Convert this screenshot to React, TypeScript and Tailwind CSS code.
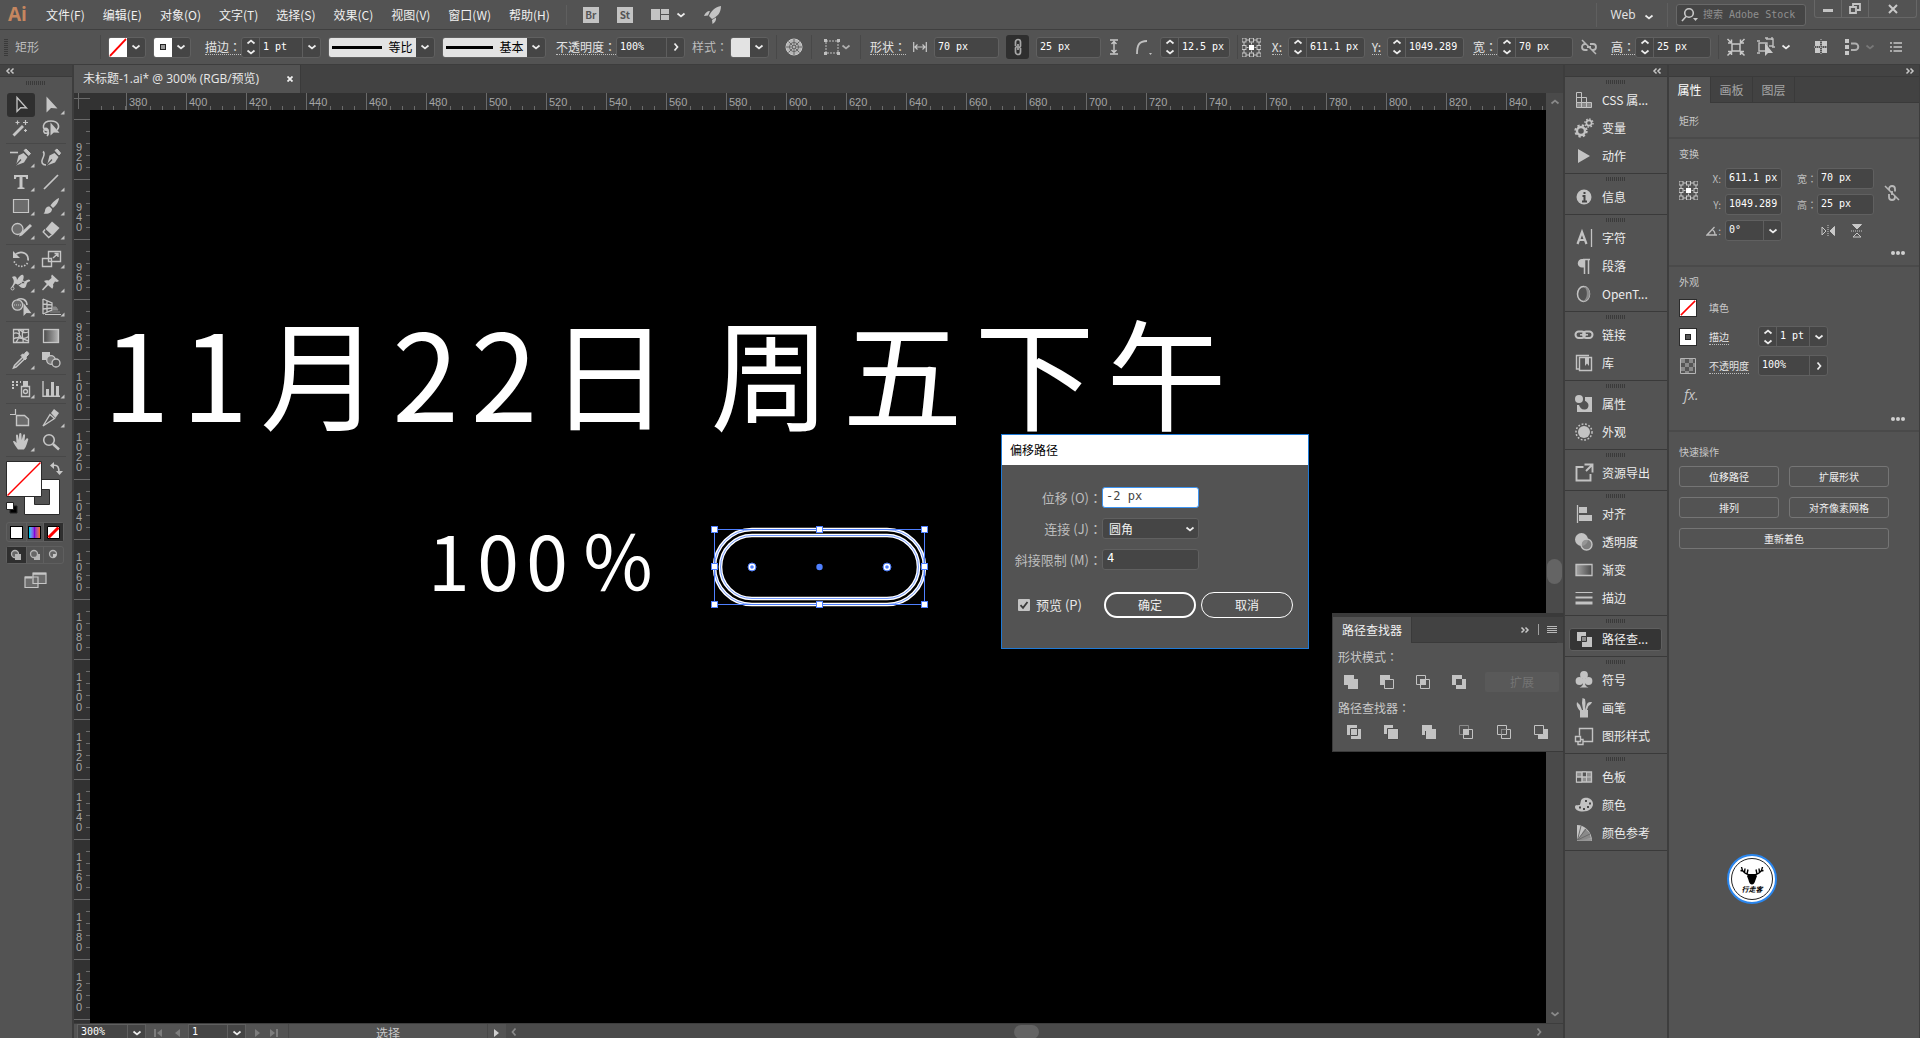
import { useState } from 'react';
import type { ReactNode } from 'react';
import clsx from 'clsx';

const MONO = "font-[family-name:'DejaVu_Sans_Mono','Noto_Sans_CJK_SC',monospace]";

const menus = ['文件(F)', '编辑(E)', '对象(O)', '文字(T)', '选择(S)', '效果(C)', '视图(V)', '窗口(W)', '帮助(H)'];

/* ---------- small shared pieces ---------- */

function Chevron({ dir = 'down', className }: { dir?: 'down' | 'up' | 'right' | 'left'; className?: string }) {
  const d = {
    down: 'M1.5 3.5 5 6.5 8.5 3.5',
    up: 'M1.5 6.5 5 3.5 8.5 6.5',
    right: 'M3.5 1.5 6.5 5 3.5 8.5',
    left: 'M6.5 1.5 3.5 5 6.5 8.5',
  }[dir];
  return (
    <svg viewBox="0 0 10 10" className={clsx('h-[10px] w-[10px] shrink-0', className ?? 'text-[#ececec]')} fill="none" stroke="currentColor" strokeWidth="1.7">
      <path d={d} />
    </svg>
  );
}

function DoubleChevron({ dir, className }: { dir: 'left' | 'right'; className?: string }) {
  return (
    <svg viewBox="0 0 10 8" className={clsx('h-2 w-[10px] shrink-0', className ?? 'text-[#c8c8c8]')} fill="none" stroke="currentColor" strokeWidth="1.5">
      {dir === 'left' ? <path d="M4.5 1.5 2 4l2.5 2.5M8.5 1.5 6 4l2.5 2.5" /> : <path d="M1.5 1.5 4 4 1.5 6.5M5.5 1.5 8 4 5.5 6.5" />}
    </svg>
  );
}

// the Traditional Chinese face centres the colon in its box
function Colon() {
  return <span lang="zh-TW" className="font-[family-name:'Noto_Sans_CJK_TC',sans-serif]">：</span>;
}

function Grip() {
  return <div className="h-1 w-5 bg-[repeating-linear-gradient(90deg,#3a3a3a_0_1px,transparent_1px_2px)]" />;
}

function Separator() {
  return <div className="h-6 w-px shrink-0 bg-[#484848]" />;
}

function Stepper({ name }: { name: string }) {
  return (
    <div className="flex w-[18px] shrink-0 flex-col items-center justify-center border-r border-[#5e5e5e]">
      <button aria-label={`${name} +`}><Chevron dir="up" /></button>
      <button aria-label={`${name} -`}><Chevron /></button>
    </div>
  );
}

type FieldProps = {
  id: string;
  label: string;
  value: string;
  className: string;
  stepper?: boolean;
  arrow?: 'down' | 'right';
};

function Field({ id, label, value, className, stepper, arrow }: FieldProps) {
  return (
    <div className={clsx('flex h-[21px] shrink-0 overflow-hidden rounded-[3px] border border-[#606060] bg-[#454545]', className)}>
      {stepper && <Stepper name={label} />}
      <input
        id={id}
        aria-label={label}
        defaultValue={value}
        className={clsx('w-0 min-w-0 grow bg-transparent px-[3px] pb-[2px] text-[10px] text-white outline-none', MONO)}
      />
      {arrow && (
        <button aria-label={`${label} ▾`} className="flex w-[18px] shrink-0 items-center justify-center border-l border-[#5e5e5e]">
          <Chevron dir={arrow} />
        </button>
      )}
    </div>
  );
}

function BarLabel({ htmlFor, children, className }: { htmlFor: string; children: ReactNode; className: string }) {
  return (
    <label htmlFor={htmlFor} className={clsx('flex shrink-0 justify-end whitespace-nowrap text-[12px] text-[#e4e4e4]', className)}>
      <span className="border-b border-dotted border-[#bdbdbd] leading-[15px]">{children}</span>
    </label>
  );
}

function NoneSwatch({ className }: { className?: string }) {
  return (
    <svg viewBox="0 0 19 19" className={className} preserveAspectRatio="none">
      <rect width="19" height="19" fill="#fff" />
      <path d="M1 18 18 1" stroke="#f00" strokeWidth="1.8" />
    </svg>
  );
}

function Swatch({ label, className, children }: { label: string; className: string; children: ReactNode }) {
  return (
    <button aria-label={label} className={clsx('flex h-[21px] shrink-0 overflow-hidden rounded-[3px] border border-[#606060] bg-[#454545]', className)}>
      <span className="flex h-full grow items-center justify-center bg-[#e3e3e3] text-[12px] text-black">{children}</span>
      <span className="flex h-full w-[18px] shrink-0 items-center justify-center"><Chevron /></span>
    </button>
  );
}

function RefPoint({ className }: { className: string }) {
  const pts = [2, 9.5, 17];
  return (
    <svg viewBox="0 0 19 19" className={className} fill="none" stroke="#c8c8c8">
      <path d="M2 2h15v15H2z" />
      {pts.map((y) =>
        pts.map((x) => (
          <rect
            key={`${x}-${y}`}
            x={x - 2}
            y={y - 2}
            width="4"
            height="4"
            fill={x === 9.5 && y === 9.5 ? '#fff' : '#535353'}
            stroke={x === 9.5 && y === 9.5 ? '#fff' : '#c8c8c8'}
          />
        )),
      )}
      <path d="M4.500 9.500h2M12.500 9.500h2M9.500 4.500v2M9.500 12.500v2" />
    </svg>
  );
}

function Unlink({ className }: { className?: string }) {
  return (
    <svg viewBox="0 0 18 18" className={className} fill="none" stroke="#b8b8b8" strokeWidth="1.8">
      <path d="M6 6V5a3 3 0 0 1 6 0v2.500M6 10v3a3 3 0 0 0 6 0v-1M9 7v4" />
      <path d="M2 2l14 14" strokeWidth="1.5" />
    </svg>
  );
}

/* ---------- top bars ---------- */

function MenuBar() {
  return (
    <header className="flex h-[30px] shrink-0 items-center border-b border-[#3f3f3f] pl-2">
      <span className="w-[22px] text-[19px] font-bold leading-none text-[#c6865f] font-[family-name:'Open_Sans',sans-serif]">Ai</span>
      <nav className="flex gap-[18px] pl-4">
        {menus.map((m) => (
          <button key={m} className="whitespace-nowrap text-[12px] text-[#f0f0f0]">{m}</button>
        ))}
      </nav>
      <div className="ml-4 h-5 w-px bg-[#5f5f5f]" />
      <div className="flex items-center gap-[18px] pl-4">
        <button className="h-4 w-4 bg-[#c3c3c3] text-center text-[10px] font-bold leading-4 text-[#555]">Br</button>
        <button className="h-4 w-4 bg-[#c3c3c3] text-center text-[10px] font-bold leading-4 text-[#555]">St</button>
        <button aria-label="排列文档" className="flex items-center gap-[7px]">
          <svg viewBox="0 0 18 11" className="h-[11px] w-[18px]" fill="#c3c3c3">
            <path d="M0 0h9v11H0zM10 0h8v5h-8zM10 6h8v5h-8z" />
          </svg>
          <Chevron />
        </button>
        <button aria-label="GPU">
          <svg viewBox="0 0 18 18" className="h-[18px] w-[18px]" fill="#c3c3c3">
            <path d="M17 0C11 1 7 5 5 10l3 3c5-2 9-6 9-13zM6 5C3 5 1 7 0 10l4-.5zM8 14l4-2.500c.5 3-1 5-3.500 6.500z" />
          </svg>
        </button>
      </div>
      <div className="ml-auto flex h-full items-center">
        <div className="h-6 w-px bg-[#5f5f5f]" />
        <button className="flex h-6 w-[70px] items-center justify-center gap-2 text-[12px] text-[#e6e6e6] font-[family-name:'Open_Sans',sans-serif]">
          Web <Chevron className="mt-1 text-[#ececec]" />
        </button>
        <div className="h-6 w-px bg-[#5f5f5f]" />
        <div className="ml-2 flex h-[22px] w-[130px] items-center rounded-[3px] border border-[#686868] bg-[#454545] pl-1">
          <svg viewBox="0 0 18 16" className="h-4 w-[18px] shrink-0" fill="none" stroke="#c8c8c8" strokeWidth="1.6">
            <circle cx="8" cy="6" r="4.300" />
            <path d="M5 9.500 1 14" />
            <path d="M12 11h5l-2.500 3z" fill="#c8c8c8" stroke="none" />
          </svg>
          <input
            aria-label="搜索 Adobe Stock"
            placeholder="搜索 Adobe Stock"
            className={clsx('ml-1 w-0 grow bg-transparent text-[10px] text-white outline-none placeholder:text-[#8f8f8f]', MONO)}
          />
        </div>
        <div className="ml-2 mr-[3px] flex h-[18px] self-start rounded-b-[3px] border border-t-0 border-[#676767]">
          <button aria-label="最小化" className="flex w-[27px] items-center justify-center border-r border-[#676767]">
            <span className="mt-1 h-[3px] w-[10px] bg-[#c3c3c3]" />
          </button>
          <button aria-label="还原" className="flex w-[27px] items-center justify-center border-r border-[#676767]">
            <svg viewBox="0 0 12 11" className="h-[11px] w-3" fill="none" stroke="#c3c3c3" strokeWidth="1.8">
              <path d="M1 4h6v6H1zM4 3V1h7v6H8" />
            </svg>
          </button>
          <button aria-label="关闭" className="flex w-[47px] items-center justify-center">
            <svg viewBox="0 0 10 10" className="h-[10px] w-[10px]" stroke="#c8c8c8" strokeWidth="2">
              <path d="M1 1l8 8M9 1 1 9" />
            </svg>
          </button>
        </div>
      </div>
    </header>
  );
}

function ControlBar() {
  return (
    <section className="flex h-[35px] shrink-0 items-center gap-[7px] border-b border-[#3d3d3d] pl-1">
      <div className="h-[18px] w-1 shrink-0 bg-[repeating-linear-gradient(0deg,#3a3a3a_0_1px,transparent_1px_2px)]" />
      <span className="w-[78px] shrink-0 text-[12px] text-[#bdbdbd]">矩形</span>
      <Separator />
      <Swatch label="填色" className="w-[38px]"><NoneSwatch className="h-full w-full" /></Swatch>
      <Swatch label="描边颜色" className="w-[38px]">
        <span className="flex h-full w-full items-center justify-center bg-white"><span className="h-[6px] w-[6px] border border-[#222] bg-[#999]" /></span>
      </Swatch>
      <div className="flex shrink-0 items-center">
        <BarLabel htmlFor="bar-stroke" className="w-[43px]">描边<Colon /></BarLabel>
        <Field id="bar-stroke" label="描边" value="1 pt" className="w-[80px]" stepper arrow="down" />
      </div>
      <Swatch label="变量宽度配置文件" className="w-[107px]">
        <span className="flex items-center gap-[6px]"><span className="h-[3px] w-[50px] bg-black" />等比</span>
      </Swatch>
      <Swatch label="画笔定义" className="w-[104px]">
        <span className="flex items-center gap-[6px]"><span className="h-[3px] w-[47px] bg-black" />基本</span>
      </Swatch>
      <div className="flex shrink-0 items-center">
        <BarLabel htmlFor="bar-opacity" className="w-[63px]">不透明度<Colon /></BarLabel>
        <Field id="bar-opacity" label="不透明度" value="100%" className="w-[69px]" arrow="right" />
      </div>
      <div className="flex shrink-0 items-center">
        <span className="w-[38px] text-[12px] text-[#bdbdbd]">样式<Colon /></span>
        <Swatch label="样式" className="w-[39px]">{null}</Swatch>
      </div>
      <Separator />
      <button aria-label="重新着色图稿" className="shrink-0">
        <svg viewBox="0 0 20 20" className="h-5 w-5" stroke="#666" strokeWidth="1">
          <circle cx="10" cy="10" r="8" fill="#b5b5b5" stroke="#c8c8c8" />
          <path d="M10 2v16M2 10h16M4.500 4.500l11 11M15.500 4.500l-11 11" />
          <circle cx="10" cy="10" r="4.500" fill="none" />
          <circle cx="10" cy="10" r="1.500" fill="#d5d5d5" />
        </svg>
      </button>
      <Separator />
      <button aria-label="对齐所选对象" className="flex w-[34px] shrink-0 items-center">
        <svg viewBox="0 0 18 18" className="ml-1 h-[18px] w-[18px]" fill="none" stroke="#c0c0c0">
          <path d="M3 3h12v12H3z" strokeDasharray="2 1" />
          <path d="M1 1h3v3H1zM14 1h3v3h-3zM1 14h3v3H1zM14 14h3v3h-3z" fill="#c0c0c0" stroke="none" />
        </svg>
        <Chevron className="text-[#b0b0b0]" />
      </button>
      <Separator />
      <BarLabel htmlFor="bar-shape-w" className="w-[38px]">形状<Colon /></BarLabel>
      <svg viewBox="0 0 14 10" className="h-[10px] w-[14px] shrink-0" fill="none" stroke="#c8c8c8" strokeWidth="1.2">
        <path d="M.7 0v10M13.300 0v10M2 5h10M4.500 2.500 2 5l2.500 2.500M9.500 2.500 12 5 9.500 7.500" />
      </svg>
      <Field id="bar-shape-w" label="形状宽度" value="70 px" className="w-[65px]" />
      <button aria-label="约束宽度和高度比例" className="flex h-6 w-[23px] shrink-0 items-center justify-center rounded-[3px] bg-[#2f2f2f]">
        <svg viewBox="0 0 10 18" className="h-[18px] w-[10px]" fill="none" stroke="#a8a8a8" strokeWidth="1.7">
          <path d="M2.500 8V4a2.500 2.500 0 0 1 5 0v4a2 2 0 0 1-1.500 1.500M7.500 10v4a2.500 2.500 0 0 1-5 0v-4A2 2 0 0 1 4 8.500M5 6v6" />
        </svg>
      </button>
      <Field id="bar-shape-h" label="形状高度" value="25 px" className="w-[65px]" />
      <svg viewBox="0 0 12 16" className="h-4 w-3 shrink-0" fill="none" stroke="#c8c8c8" strokeWidth="1.4">
        <path d="M2 1h8M2 15h8M6 2v12M3.500 5 6 2.500 8.500 5M3.500 11 6 13.500 8.500 11" />
      </svg>
      <button aria-label="圆角类型" className="flex w-[26px] shrink-0 justify-end">
        <svg viewBox="0 0 18 18" className="h-[18px] w-[18px]" fill="none" stroke="#c0c0c0" strokeWidth="1.8">
          <path d="M2 16C2 7 4 3 12 3" />
          <path d="M14 15h3l-1.500 2z" fill="#c0c0c0" stroke="none" />
        </svg>
      </button>
      <Field id="bar-radius" label="圆角半径" value="12.5 px" className="w-[70px]" stepper />
      <div className="flex shrink-0 items-center gap-1">
        <Separator />
        <RefPoint className="h-[19px] w-[19px] shrink-0" />
        <div className="flex items-center">
          <BarLabel htmlFor="bar-x" className="w-[23px] pr-[6px]">X:</BarLabel>
          <Field id="bar-x" label="X" value="611.1 px" className="w-[77px]" stepper />
        </div>
      </div>
      <div className="flex shrink-0 items-center">
        <BarLabel htmlFor="bar-y" className="w-[15px] pr-[6px]">Y:</BarLabel>
        <Field id="bar-y" label="Y" value="1049.289" className="w-[77px]" stepper />
      </div>
      <div className="flex shrink-0 items-center">
        <BarLabel htmlFor="bar-w" className="w-[26px]">宽<Colon /></BarLabel>
        <Field id="bar-w" label="宽" value="70 px" className="w-[76px]" stepper />
      </div>
      <Unlink className="h-[18px] w-[18px] shrink-0 rotate-90 -scale-y-100" />
      <div className="flex shrink-0 items-center">
        <BarLabel htmlFor="bar-h" className="w-[30px]">高<Colon /></BarLabel>
        <Field id="bar-h" label="高" value="25 px" className="w-[76px]" stepper />
      </div>
      <Separator />
      <button aria-label="隔离选中的对象" className="shrink-0">
        <svg viewBox="0 0 20 20" className="h-5 w-5" fill="none" stroke="#c8c8c8" strokeWidth="1.5">
          <path d="M6 7h8v7H6z" />
          <path d="M1.500 2 5 5.500M18.500 2 15 5.500M1.500 18.500 5 15M18.500 18.500 15 15M5.500 2.500v3.500H2M14.500 2.500v3.500H18M5.500 18v-3.500H2M14.500 18v-3.500H18" />
        </svg>
      </button>
      <button aria-label="选择类似的对象" className="flex w-[38px] shrink-0 items-center justify-end gap-[6px]">
        <svg viewBox="0 0 18 20" className="h-5 w-[18px]" fill="none" stroke="#c0c0c0" strokeWidth="1.4">
          <path d="M2 6h8v8H2zM9 2h7v7h-4" />
          <path d="M0 4h3M0 16h3M8 1h3M15 0v3M15 10h3" />
          <path d="M8 6v13l3-3h5z" fill="#c8c8c8" stroke="none" />
        </svg>
        <Chevron />
      </button>
      <div className="ml-auto flex shrink-0 items-center gap-[15px] pr-[18px]">
        <button aria-label="对齐像素网格">
          <svg viewBox="0 0 16 18" className="h-[18px] w-4" fill="#c8c8c8">
            <path d="M2 3h5v5H2zM9 3h5v5H9zM2 10h5v5H2zM9 10h5v5H9z" />
            <path d="M8 1v16M1 9h14" stroke="#c8c8c8" strokeDasharray="1 1" />
          </svg>
        </button>
        <button aria-label="对齐像素选项" className="flex items-center gap-[5px]">
          <svg viewBox="0 0 16 16" className="h-4 w-4" fill="#c8c8c8">
            <path d="M1 0h4v4H1zM1 6h4v4H1zM1 12h4v4H1z" />
            <path d="M7 4.500h4a3 3 0 0 1 0 6.500H7" fill="none" stroke="#b0b0b0" strokeWidth="2" />
          </svg>
          <Chevron className="text-[#787878]" />
        </button>
        <button aria-label="控制菜单">
          <svg viewBox="0 0 12 12" className="h-3 w-3" stroke="#c8c8c8" strokeWidth="1.6">
            <path d="M0 2h2M3.500 2H12M0 6h2M3.500 6H12M0 10h2M3.500 10H12" />
          </svg>
        </button>
      </div>
    </section>
  );
}

/* ---------- tools ---------- */

type Tool = { name: string; more?: boolean; art: ReactNode };

const f = { fill: 'currentColor', stroke: 'none' };

const toolGroups: Tool[][] = [
  [
    { name: '选择工具', art: <path d="M10 4.500v14l3.700-3.800 5.800.3z" strokeWidth="1.300" /> },
    { name: '直接选择工具', more: true, art: <path d="M9.500 3.500v16l4.500-4.500 6.500.5z" {...f} /> },
    {
      name: '魔棒工具',
      art: (
        <>
          <path d="M6.500 18.500 16 9" strokeWidth="2.800" />
          <path d="M10.500 3.500v4M8.500 5.500h4M18.500 3v5M16 5.500h5M18.500 12v3M17 13.500h3" strokeWidth="1.200" />
        </>
      ),
    },
    {
      name: '套索工具',
      art: (
        <>
          <path d="M11 14C4 13 5 4 14 4c8 0 9 6 6 9M7 12c3-2 6 2 3 4-2 1-4-1-3-3 1-1 3-1 4 1 1 2 0 4-1 5" strokeWidth="1.500" />
          <path d="M13.500 5.500v13l3.300-3 5.700.3z" {...f} />
        </>
      ),
    },
  ],
  [
    {
      name: '钢笔工具',
      more: true,
      art: (
        <>
          <path d="M9 19.500 11.500 9.500l5-2.500 4 4-3.500 5.500z" {...f} />
          <path d="M17 4.500 19 3l4.500 4.500-1.800 2z" fill="currentColor" />
          <path d="M3 6.500h8" strokeWidth="1.600" />
          <path d="m9 19 5-5.500" stroke="#535353" strokeWidth="1.200" />
        </>
      ),
    },
    {
      name: '曲率工具',
      art: (
        <>
          <path d="M10 19.500 12.500 9.500l5-2.500 4 4-3.500 5.500z" {...f} />
          <path d="M18 4.500 20 3l3.500 4-1.300 2z" fill="currentColor" />
          <path d="M9 19c-4 0-5-3-3.500-6S8 7 6 5.500" strokeWidth="1.600" />
          <path d="m10 19 5-5.500" stroke="#535353" strokeWidth="1.200" />
        </>
      ),
    },
    { name: '文字工具', more: true, art: <path d="M7 5h14v4h-1.800l-.6-2H15.500v10.200l2 .6V19h-7v-1.200l2-.6V7H9.400l-.6 2H7z" {...f} /> },
    { name: '直线段工具', more: true, art: <path d="M7 19 21 5" strokeWidth="1.700" /> },
    { name: '矩形工具', more: true, art: <path d="M6.500 5.500h15v13h-15z" fill="#6c6c6c" strokeWidth="1.200" /> },
    {
      name: '画笔工具',
      more: true,
      art: <path d="M22 4c-3 1-7 5-8.500 7.500l2.500 2.500C19 12 22 7 22 4zM12.500 12.500l2.500 2.500c0 4-4 5.500-8.500 4.500 2-1 1-3.500 2.500-5.500 1-1.200 2.300-1.600 3.500-1.500z" {...f} />,
    },
    {
      name: 'Shaper 工具',
      more: true,
      art: (
        <>
          <circle cx="10.500" cy="11" r="5.500" fill="#6c6c6c" strokeWidth="1.300" />
          <path d="M12 18.500 13 15.500 23 6l2 2-10 9.500z" {...f} />
        </>
      ),
    },
    {
      name: '橡皮擦工具',
      more: true,
      art: (
        <>
          <path d="M15 3.500 22.500 10l-7 7.500L8.500 11z" {...f} />
          <path d="m8 11.500-1.800 2.500 5.500 5.500 3-2.500" strokeWidth="1.400" />
        </>
      ),
    },
  ],
  [
    {
      name: '旋转工具',
      more: true,
      art: (
        <>
          <path d="M9 7c6-4 13 0 12 6.500" strokeWidth="1.800" />
          <path d="M20.500 16A7.500 7.500 0 0 1 7 14" strokeWidth="1.600" strokeDasharray="1.500 1.500" />
          <path d="M6 4v7h7z" {...f} />
        </>
      ),
    },
    { name: '比例缩放工具', more: true, art: <path d="M11.500 4.500h12v10h-12zM5.500 11.500h9v8h-9zM16 11l5-4.500M17.500 6.500H21V10" strokeWidth="1.400" /> },
    {
      name: '宽度工具',
      more: true,
      art: (
        <>
          <path d="M5 6c3-2 5 0 5 3 2-4 5-6 6-5 2 2-1 6 0 7 2 0 5-4 7-2 1 2-2 1-3 3-1 3-1 5-4 5-4 0-5-5-8-4l-3 5-1-1c3-5 4-7 1-11z" {...f} />
          <path d="M6 17 15 12" stroke="#535353" />
          <circle cx="5.500" cy="17.500" r="1.500" fill="#535353" />
          <circle cx="16" cy="11.500" r="1.500" fill="#535353" />
        </>
      ),
    },
    { name: '操控变形工具', more: true, art: <path d="m15 3.500 7 6.500-2 1-2-.5-2 3c.5 1.500.3 3-.8 4.200l-4-3.500L6 19.500l-1-1L9.800 13 7 10c1.500-1 3-1 4.500-.5l3-2.500-.3-2z" {...f} /> },
    {
      name: '形状生成器工具',
      more: true,
      art: (
        <>
          <circle cx="10.500" cy="10" r="5.200" fill="#6c6c6c" strokeWidth="1.300" />
          <path d="M10 5c5-3 10 0 10 5" strokeWidth="1.500" />
          <path d="M7 10h9" strokeDasharray="1 1" />
          <path d="M16.500 8v13l3-3 5 .2z" {...f} />
        </>
      ),
    },
    {
      name: '透视网格工具',
      more: true,
      art: (
        <>
          <path d="M6 4v15M6 4l9 4v7L6 19M10 6v11M6 9l9 1M6 14l9-1" strokeWidth="1.300" />
          <path d="M16 12h3l2 3h-5zM13 17h10" fill="#888" stroke="#888" />
          <path d="M8 19.500h16" />
        </>
      ),
    },
  ],
  [
    {
      name: '网格工具',
      art: (
        <path d="M6.500 5.500h15v13h-15zM6.500 9.500c4-2 6 1 7 3s4 3 8 0M6.500 15c4-3 10 0 15 2M11 5.500c3 3 1 9-2 13M17 5.500c-4 4 0 9-1 13M13 6c3 3 6 3 8 2" strokeWidth="1.300" />
      ),
    },
    { name: '渐变工具', art: <rect x="6.500" y="5.500" width="15" height="13" fill="url(#fade)" strokeWidth="1.300" /> },
    {
      name: '吸管工具',
      more: true,
      art: (
        <>
          <path d="m16 9-8.500 8.500-1 2.500 2.500-1L17.500 11" strokeWidth="1.500" />
          <path d="M14 7.500 15.500 6l1.500.5 2-2.500c1-1 3.500 1 2.500 2.500l-2.500 2.500.5 1.500-1.500 1.500z" fill="currentColor" />
        </>
      ),
    },
    {
      name: '混合工具',
      art: (
        <>
          <path d="M5 4h8v8H5z" {...f} />
          <circle cx="14" cy="12" r="4.300" fill="#777" strokeWidth="1.300" />
          <circle cx="19" cy="15" r="4" fill="#535353" strokeWidth="1.300" />
        </>
      ),
    },
  ],
  [
    {
      name: '符号喷枪工具',
      more: true,
      art: (
        <>
          <path d="M5 5h2M9 5h2M5 8h2M9 8h2M5 11h2M13 5h1" strokeWidth="2" />
          <path d="M14.500 9.500h8v10h-8z" strokeWidth="1.400" />
          <path d="M16 4h5v5h-5z" {...f} />
          <circle cx="18.500" cy="14.500" r="2" strokeWidth="1.400" />
        </>
      ),
    },
    {
      name: '柱形图工具',
      more: true,
      art: (
        <>
          <path d="M6 4v15.300h17" strokeWidth="1.400" />
          <path d="M9 12h3v7H9zM14 5h3v14h-3zM19 9h3v10h-3z" {...f} />
        </>
      ),
    },
  ],
  [
    { name: '画板工具', art: <><path d="M9.500 9.500h8l4 3.500v6.500h-12z" fill="#6c6c6c" strokeWidth="1.400" /><path d="M8.500 3v5.500H3" strokeWidth="1.200" /></> },
    {
      name: '切片工具',
      more: true,
      art: (
        <>
          <path d="M6 20 13 8.500l4.500 4z" strokeWidth="1.400" />
          <path d="m14 7 3-4 5 4-3.500 5z" {...f} />
        </>
      ),
    },
    {
      name: '抓手工具',
      more: true,
      art: <path d="M11 19.500C9 17 7 14 6 11.500c1-1 2.200-.3 3.500 1.500L9 5.500c.3-1.300 1.700-1.300 2 0l.8 4.500.4-6c.3-1.300 2-1.300 2.200 0l.3 6 1.400-5c.5-1.200 2-.9 2 .5L17.500 11l2-2.500c1-.8 2.200.2 1.700 1.300-1.200 3-1.700 7-4.200 9.700z" {...f} />,
    },
    { name: '缩放工具', art: <><circle cx="12" cy="10" r="5.300" strokeWidth="1.600" /><path d="m16 14 6 5.500" strokeWidth="2.600" /></> },
  ],
];

function ToolsPanel() {
  const [active, setActive] = useState('选择工具');
  return (
    <aside className="flex w-[74px] shrink-0 flex-col border-r-2 border-[#3d3d3d] bg-[#535353]">
      <div className="flex h-3 shrink-0 items-center border-b border-[#3a3a3a] bg-[#434343] pl-[5px]"><DoubleChevron dir="left" /></div>
      <div className="flex justify-center pb-[6px] pt-1"><Grip /></div>
      <svg className="h-0 w-0">
        <defs>
          <linearGradient id="fade"><stop stopColor="#4a4a4a" /><stop offset="1" stopColor="#b5b5b5" /></linearGradient>
          <linearGradient id="fade2"><stop stopColor="#a5a5a5" /><stop offset="1" stopColor="#4a4a4a" /></linearGradient>
        </defs>
      </svg>
      <div className="px-[6px]">
        {toolGroups.map((group, i) => (
          <div key={i} className="grid grid-cols-[30px_30px] border-b border-[#484848] pb-[2px] pl-px pt-[2px]">
            {group.map((t) => (
              <button
                key={t.name}
                aria-label={t.name}
                onClick={() => setActive(t.name)}
                className={clsx('flex h-6 w-7 items-center justify-center rounded-[3px] text-[#c6c6c6]', active === t.name && 'bg-[#2f2f2f]')}
              >
                <svg viewBox="0 0 28 24" className="h-6 w-7" fill="none" stroke="currentColor">
                  {t.art}
                  {t.more && <path d="M27.500 17.500v4h-4z" fill="currentColor" stroke="none" />}
                </svg>
              </button>
            ))}
          </div>
        ))}
        <svg viewBox="0 0 60 58" className="mt-1 h-[58px] w-[60px]" role="img" aria-label="填色和描边">
          <path d="M18.500 18.500h35v35h-35zM28.500 28.500v15h15v-15z" fill="#fff" stroke="#2b2b2b" fillRule="evenodd" />
          <path d="M.5.500h35v35H.5z" fill="#fff" stroke="#2b2b2b" />
          <path d="M1.500 34.500 34.500 1.500" stroke="#f00" strokeWidth="1.500" />
          <path d="M47 4.500c5-1 6 2 6 7" fill="none" stroke="#c6c6c6" strokeWidth="1.600" />
          <path d="M48 1v7l-4-3.500zM50 10h7l-3.500 4z" fill="#c6c6c6" />
          <path d="M4 45h7v7H4z" fill="#000" stroke="#222" />
          <path d="M.5 41.500h7v7h-7z" fill="#fff" stroke="#222" />
        </svg>
        <div className="mt-[3px] grid h-5 w-[58px] grid-cols-3 rounded-[3px] border border-[#5f5f5f]">
          <button aria-label="颜色" className="flex items-center justify-center"><span className="h-[13px] w-[13px] border border-black bg-white" /></button>
          <button aria-label="渐变" className="flex items-center justify-center border-x border-[#5f5f5f]">
            <span className="h-[13px] w-[13px] border border-black bg-linear-to-r from-cyan-400 via-purple-700 to-orange-500" />
          </button>
          <button aria-label="无" className="flex items-center justify-center bg-[#2f2f2f]">
            <svg viewBox="0 0 13 13" className="h-[13px] w-[13px]"><path d="M.5.500h12v12H.5z" fill="#fff" stroke="#000" /><path d="M1.500 11.500 11.500 1.500" stroke="#f00" strokeWidth="3" /></svg>
          </button>
        </div>
        <div className="mt-1 grid h-[18px] w-[58px] grid-cols-3 rounded-[3px] border border-[#5f5f5f]">
          {['正常绘图', '背面绘图', '内部绘图'].map((name, i) => (
            <button key={name} aria-label={name} className={clsx('flex items-center justify-center', i === 0 && 'bg-[#2f2f2f]', i === 1 && 'border-x border-[#5f5f5f]')}>
              <svg viewBox="0 0 12 12" className="h-3 w-3">
                {i === 1 && <path d="M5 5h6v6H5z" fill="#b5b5b5" />}
                <circle cx="5" cy="5" r="3.500" fill="#666" stroke="#b5b5b5" strokeWidth="1.300" />
                {i === 0 && <path d="M5 5h6v6H5z" fill="#b5b5b5" />}
                {i === 2 && <path d="M5 5h3.500a3.500 3.500 0 0 1-3.500 3.500z" fill="#c5c5c5" />}
              </svg>
            </button>
          ))}
        </div>
        <button aria-label="更改屏幕模式" className="ml-[18px] mt-2 block">
          <svg viewBox="0 0 24 17" className="h-[17px] w-6" fill="#6c6c6c" stroke="#c6c6c6" strokeWidth="1.200">
            <path d="M1 5h13v10.500H1zM9 1h13v10.500H9z" />
            <path d="M1 5.500h7M9 1.800h13" strokeWidth="2" />
          </svg>
        </button>
      </div>
    </aside>
  );
}

/* ---------- document ---------- */

const hLabels = [380, 400, 420, 440, 460, 480, 500, 520, 540, 560, 580, 600, 620, 640, 660, 680, 700, 720, 740, 760, 780, 800, 820, 840];
const vLabels = [920, 940, 960, 980, 1000, 1020, 1040, 1060, 1080, 1100, 1120, 1140, 1160, 1180, 1200];

function MinorTicks({ vertical, count = 4 }: { vertical?: boolean; count?: number }) {
  return (
    <>
      {Array.from({ length: count }, (_, i) => (
        <span
          key={i}
          className={clsx('shrink-0', vertical ? 'h-3 w-1 border-b border-[#6a6a6a]' : 'h-1 w-3 border-r border-[#6a6a6a]')}
        />
      ))}
    </>
  );
}

const RULER = "text-[11px] text-[#a5a5a5] font-[family-name:'Liberation_Sans',sans-serif]";

function HRuler() {
  return (
    <div className={clsx('flex h-[17px] grow overflow-hidden bg-[#323232]', RULER)}>
      <div className="flex w-9 shrink-0 items-end"><MinorTicks count={3} /></div>
      {hLabels.map((n) => (
        <div key={n} className="flex w-[60px] shrink-0 flex-col justify-between border-l border-[#6a6a6a]">
          <span className="h-[13px] pl-[2px] leading-[18px]">{n}</span>
          <span className="flex"><MinorTicks /></span>
        </div>
      ))}
    </div>
  );
}

function VRuler() {
  return (
    <div className={clsx('flex w-4 shrink-0 flex-col overflow-hidden bg-[#323232]', RULER)}>
      <div className="h-[9px] shrink-0" />
      {vLabels.map((n) => (
        <div key={n} className="flex h-[60px] shrink-0 items-start justify-between border-t border-[#6a6a6a]">
          <span className="flex h-full w-[10px] flex-col items-center justify-end pb-[7px] leading-[10px]">
            {String(n).split('').map((c, i) => <span key={i}>{c}</span>)}
          </span>
          <span className="flex flex-col"><MinorTicks vertical /></span>
        </div>
      ))}
      <div className="h-3 shrink-0 border-t border-[#6a6a6a]" />
    </div>
  );
}

function Battery() {
  const handles = [[4, 4], [109, 4], [214, 4], [4, 41], [214, 41], [4, 79], [109, 79], [214, 79]];
  return (
    <svg viewBox="0 0 218 83" className="absolute left-[620px] top-[415px] h-[83px] w-[218px]" fill="none">
      <rect x="4.500" y="4.500" width="210" height="75" rx="37.500" stroke="#fff" strokeWidth="3.600" />
      <rect x="10.500" y="10.500" width="198" height="63" rx="31.500" stroke="#fff" strokeWidth="3.600" />
      <g stroke="#4f80ff">
        <rect x="4.500" y="4.500" width="210" height="75" rx="37.500" strokeWidth=".8" />
        <rect x="10.500" y="10.500" width="198" height="63" rx="31.500" strokeWidth=".8" />
        <rect x="4.500" y="4.500" width="210" height="75" />
        {handles.map(([x, y]) => <rect key={`${x}-${y}`} x={x - 2.5} y={y - 2.5} width="6" height="6" fill="#fff" />)}
        <circle cx="42" cy="42" r="2.800" stroke="#fff" strokeWidth="2" fill="#4f80ff" />
        <circle cx="42" cy="42" r="4" />
        <circle cx="177" cy="42" r="2.800" stroke="#fff" strokeWidth="2" fill="#4f80ff" />
        <circle cx="177" cy="42" r="4" />
      </g>
      <circle cx="109.500" cy="42" r="3.200" fill="#4f80ff" />
    </svg>
  );
}

function OffsetPathDialog() {
  const row = 'flex items-center';
  const label = 'w-[97px] text-right text-[13px] text-[#bdbdbd]';
  const field = 'h-[21px] w-[97px] rounded-[3px] border text-[12px]';
  return (
    <form
      aria-label="偏移路径"
      onSubmit={(e) => e.preventDefault()}
      className="absolute left-[911px] top-[324px] w-[308px] border border-[#1f7ad6] bg-[#535353] pb-[30px]"
    >
      <h2 className="flex h-[30px] items-center bg-white pl-2 text-[12px] text-black">偏移路径</h2>
      <div className="flex flex-col gap-[10px] pl-[3px] pt-[22px]">
        <div className={row}>
          <label htmlFor="offset" className={label}>位移 (O)<Colon /></label>
          <input id="offset" autoFocus defaultValue="-2 px" className={clsx(field, 'border-[#3f95f2] bg-white px-[3px] pb-[3px] text-[#444] outline-none', MONO)} />
        </div>
        <div className={row}>
          <label htmlFor="join" className={label}>连接 (J)<Colon /></label>
          <div className="grid">
            <select id="join" className={clsx(field, 'col-start-1 row-start-1 appearance-none border-[#606060] bg-[#454545] pl-[6px] leading-[19px] text-[#f0f0f0]')}>
              <option>圆角</option>
              <option>斜接</option>
              <option>斜角</option>
            </select>
            <Chevron className="pointer-events-none col-start-1 row-start-1 mr-1 self-center justify-self-end text-[#ececec]" />
          </div>
        </div>
        <div className={row}>
          <label htmlFor="miter" className={label}>斜接限制 (M)<Colon /></label>
          <input id="miter" defaultValue="4" className={clsx(field, 'border-[#606060] bg-[#454545] px-1 pb-[3px] text-white outline-none', MONO)} />
        </div>
      </div>
      <div className="flex items-center pl-4 pt-[22px]">
        <div className="grid">
          <input id="preview" type="checkbox" defaultChecked className="peer col-start-1 row-start-1 h-3 w-3 appearance-none rounded-[1px] bg-[#c3c3c3]" />
          <svg viewBox="0 0 12 12" className="pointer-events-none invisible col-start-1 row-start-1 h-3 w-3 peer-checked:visible" fill="none" stroke="#3a3a3a" strokeWidth="1.8">
            <path d="M2.500 6.200 5 8.800 9.500 3" />
          </svg>
        </div>
        <label htmlFor="preview" className="w-[74px] pl-[6px] text-[13px] text-[#e6e6e6]">预览 (P)</label>
        <div className="flex gap-[5px]">
          <button type="submit" className="h-[26px] w-[92px] rounded-full border-2 border-white text-[12px] leading-none text-[#f0f0f0]">确定</button>
          <button type="button" className="h-[26px] w-[92px] rounded-full border border-white text-[12px] leading-none text-[#f0f0f0]">取消</button>
        </div>
      </div>
    </form>
  );
}

const A = 'M0 0h9v9H0z';
const B = 'M5 5h9v9H5z';

const shapeModes: { name: string; art: ReactNode }[] = [
  { name: '联集', art: <path d="M0 0h10v4h4v10H4v-4H0z" fill="#c3c3c3" /> },
  { name: '减去顶层', art: <><path d="M0 0h10v10H0z" fill="#c3c3c3" /><path d="M4.500 4.500h9v9h-9z" fill="#535353" stroke="#c3c3c3" /></> },
  { name: '交集', art: <><path d="M.5.500h9v9h-9zM4.500 4.500h9v9h-9z" fill="none" stroke="#c3c3c3" /><path d="M4 4h6v6H4z" fill="#c3c3c3" /></> },
  { name: '差集', art: <path d="M0 0h10v4h4v10H4v-4H0zM4 4v6h6V4z" fill="#c3c3c3" fillRule="evenodd" /> },
];

const pathfinders: { name: string; art: ReactNode }[] = [
  { name: '分割', art: <><path d="M0 0h10v4h4v10H4v-4H0z" fill="#c3c3c3" /><path d="M3.500 3.500h7v7h-7z" fill="#c3c3c3" stroke="#4a4a4a" /></> },
  { name: '修边', art: <><path d={`${A}${B}`} fill="#c3c3c3" /><path d="M3.500 3.500h11v11h-11z" fill="#c3c3c3" stroke="#4a4a4a" /></> },
  { name: '合并', art: <><path d="M0 0h10v4h4v10H4v-4H0z" fill="#c3c3c3" /><path d="M3.500 10V6" stroke="#4a4a4a" /></> },
  { name: '裁剪', art: <><path d="M.5.500h9v9h-9z" fill="none" stroke="#8a8a8a" /><path d="M4.500 4.500h9v9h-9z" fill="none" stroke="#c3c3c3" /><path d="M4 4h6v6H4z" fill="#c3c3c3" /></> },
  { name: '轮廓', art: <><path d="M.5.500h9v9h-9z" fill="none" stroke="#c3c3c3" /><path d="M4.500 4.500h9v9h-9z" fill="none" stroke="#c3c3c3" /><path d="M4.500 9.500v-5h5" fill="none" stroke="#8a8a8a" /></> },
  { name: '减去后方对象', art: <><path d="M4 4h10v10H4z" fill="#c3c3c3" /><path d="M.5.500h9v9h-9z" fill="#535353" stroke="#c3c3c3" /></> },
];

function PathfinderPanel() {
  return (
    <section className="absolute -right-px top-[548px] w-[232px] border border-t-4 border-[#3a3a3a] bg-[#535353] pb-[11px]">
      <div className="flex h-[26px] items-center bg-[#424242] pr-[6px]">
        <h2 className="flex h-full w-[79px] items-center justify-center border-r border-[#3a3a3a] bg-[#535353] text-[12px] text-[#f0f0f0]">路径查找器</h2>
        <div className="flex h-full grow items-center justify-end gap-2 border-b border-[#3a3a3a]">
          <button aria-label="折叠"><DoubleChevron dir="right" /></button>
          <span className="h-[11px] w-px bg-[#a0a0a0]" />
          <button aria-label="面板菜单">
            <svg viewBox="0 0 10 8" className="h-2 w-[10px]" stroke="#b8b8b8"><path d="M0 .5h10M0 2.500h10M0 4.500h10M0 6.500h10" /></svg>
          </button>
        </div>
      </div>
      <h3 className="pl-[5px] pt-[5px] text-[12px] leading-[18px] text-[#c8c8c8]">形状模式<Colon /></h3>
      <div className="flex items-center pl-[11px] pr-1 pt-[6px]">
        <div className="flex gap-[22px]">
          {shapeModes.map((m) => (
            <button key={m.name} aria-label={m.name}><svg viewBox="0 0 14 14" className="h-[14px] w-[14px]">{m.art}</svg></button>
          ))}
        </div>
        <button disabled className="ml-auto h-5 w-[74px] rounded-[2px] bg-[#595959] text-[12px] text-[#747474]">扩展</button>
      </div>
      <h3 className="pl-[5px] pt-[7px] text-[12px] leading-[18px] text-[#c8c8c8]">路径查找器<Colon /></h3>
      <div className="flex justify-between px-[14px] pt-2">
        {pathfinders.map((m) => (
          <button key={m.name} aria-label={m.name}><svg viewBox="0 0 15 15" className="h-[15px] w-[15px]">{m.art}</svg></button>
        ))}
      </div>
    </section>
  );
}

function StatusBar() {
  const nav = (d: string, name: string) => (
    <button key={name} aria-label={name}>
      <svg viewBox="0 0 8 8" className="h-2 w-2" fill="#7d7d7d"><path d={d} /></svg>
    </button>
  );
  return (
    <footer className="flex h-[15px] shrink-0 items-start overflow-hidden border-t border-[#3d3d3d] bg-[#4a4a4a]">
      <div className="flex w-[432px] shrink-0 items-center bg-[#535353] pl-[3px]">
        <Field id="zoom" label="缩放" value="300%" className="h-[17px]! w-[69px] rounded-none" arrow="down" />
        <div className="flex w-[42px] items-center justify-between pl-2 pr-[6px]">
          {nav('M0 0h2v8H0zM8 0v8L3 4z', '首项')}
          {nav('M6 0v8L1 4z', '上一项')}
        </div>
        <Field id="artboard" label="画板导航" value="1" className="h-[17px]! w-[58px] rounded-none" arrow="down" />
        <div className="flex w-[42px] items-center justify-between pl-2 pr-[10px]">
          {nav('M1 0v8l5-4z', '下一项')}
          {nav('M6 0h2v8H6zM0 0v8l5-4z', '末项')}
        </div>
        <span className="grow border-x border-[#484848] text-center text-[12px] leading-[17px] text-[#c8c8c8]">选择</span>
        <button aria-label="显示" className="flex w-[18px] items-center justify-center">
          <svg viewBox="0 0 8 8" className="h-2 w-2" fill="#d0d0d0"><path d="M1 0v8l5-4z" /></svg>
        </button>
      </div>
      <div className="flex h-[15px] grow items-center justify-between px-[3px]">
        <Chevron dir="left" className="text-[#8a8a8a]" />
        <span className="h-[14px] w-[25px] rounded-full bg-[#646464]" />
        <Chevron dir="right" className="text-[#8a8a8a]" />
      </div>
      <div className="h-full w-4 shrink-0" />
    </footer>
  );
}

function Document() {
  return (
    <main className="relative flex min-w-0 grow flex-col border-r-2 border-[#3d3d3d] bg-[#424242]">
      <div className="flex h-7 shrink-0">
        <div className="flex w-[227px] items-center justify-between border-r border-[#3a3a3a] bg-[#535353] pl-[9px] pr-[7px] text-[12px] text-[#e8e8e8] font-[family-name:'Open_Sans','Noto_Sans_CJK_SC',sans-serif]">
          未标题-1.ai* @ 300% (RGB/预览)
          <button aria-label="关闭">
            <svg viewBox="0 0 6 6" className="h-[6px] w-[6px]" stroke="#f0f0f0" strokeWidth="1.800"><path d="M.5.500l5 5M5.500.500l-5 5" /></svg>
          </button>
        </div>
      </div>
      <div className="flex min-h-0 grow">
        <div className="flex min-w-0 grow flex-col">
          <div className="flex shrink-0">
            <div className="h-[17px] w-4 shrink-0 bg-[#323232]">
              <svg viewBox="0 0 16 17" className="h-[17px] w-4" stroke="#6a6a6a" strokeWidth="1"><path d="M0 5.500h16M4.500 0v16" /></svg>
            </div>
            <HRuler />
          </div>
          <div className="flex min-h-0 grow">
            <VRuler />
            <div className="relative min-w-0 grow bg-black text-white">
              <p className="absolute left-[13px] top-[200px] flex gap-[29px] whitespace-nowrap text-[120px] leading-none tracking-widest">
                <span>11月22日</span>
                <span>周五下午</span>
              </p>
              <p className="absolute left-[338px] top-[411px] flex gap-[5px] whitespace-nowrap text-[75px] leading-none tracking-widest">
                <span>100</span>
                <span>％</span>
              </p>
              <Battery />
              <OffsetPathDialog />
            </div>
          </div>
        </div>
        <div className="flex w-[17px] shrink-0 flex-col items-center justify-between bg-[#4a4a4a] pb-1 pt-1">
          <Chevron dir="up" className="text-[#8a8a8a]" />
          <span className="mt-[26px] h-[25px] w-[15px] rounded-full bg-[#646464]" />
          <Chevron className="text-[#8a8a8a]" />
        </div>
      </div>
      <StatusBar />
      <PathfinderPanel />
    </main>
  );
}

/* ---------- collapsed panel dock ---------- */

const dock: { label: string; art: ReactNode }[][] = [
  [
    { label: 'CSS 属...', art: <><path d="M2.500 2.500h5v5h-5zM2.500 7.500h5v5h-5zM7.500 7.500h5v5h-5z" /><path d="M2.500 12.500h5v5h-5zM7.500 12.500h5v5h-5zM12.500 12.500h5v5h-5z" fill="#888" /></> },
    {
      label: '变量',
      art: (
        <>
          <circle cx="7" cy="13" r="4" strokeWidth="2.400" />
          <circle cx="7" cy="13" r="5.700" strokeWidth="2" strokeDasharray="2.300 2.200" />
          <circle cx="15" cy="5" r="2.600" strokeWidth="1.600" />
          <circle cx="15" cy="5" r="4" strokeWidth="1.500" strokeDasharray="1.500 1.600" />
        </>
      ),
    },
    { label: '动作', art: <path d="M4 3v14l12-7z" {...f} /> },
  ],
  [{ label: '信息', art: <><circle cx="10" cy="10" r="7.500" {...f} /><path d="M10.500 5v2M8.500 9h2v5.500M8 14.500h5" stroke="#444" strokeWidth="2" /></> }],
  [
    { label: '字符', art: <><path d="M3.500 16 8 4l4.500 12M5 12h6.500" strokeWidth="2.200" /><path d="M17.500 1v18" strokeWidth="1.300" /></> },
    { label: '段落', art: <><path d="M10 3H8a4 4 0 0 0 0 8.500h2z" {...f} /><path d="M10.500 3v15M14.500 3v15M9 3.500h7" strokeWidth="1.500" /></> },
    { label: 'OpenT...', art: <><ellipse cx="9.500" cy="10" rx="6" ry="7.500" strokeWidth="1.500" /><path d="M10 2.500c8 1 8 14-1 15 5-3 5-12 1-15z" fill="#8a8a8a" stroke="none" /></> },
  ],
  [
    { label: '链接', art: <><rect x="1.500" y="6.500" width="9.500" height="6.500" rx="3.200" strokeWidth="2" /><rect x="9" y="6.500" width="9.500" height="6.500" rx="3.200" strokeWidth="2" /><path d="M6 9.800h8" strokeWidth="1.500" /></> },
    { label: '库', art: <><path d="M5.500 4.500h12v13h-12zM15 2.500H2.500V16h3" strokeWidth="1.400" /><path d="M11 5h4v8l-2-2.500-2 2.500z" {...f} /></> },
  ],
  [
    { label: '属性', art: <><circle cx="5" cy="5" r="4" {...f} /><path d="M11 3h7v15H3v-7h2c1 3 3 5 6 4.500 3.500-.5 4-4 3-6C13.500 8.500 12 7 11 7z" {...f} /></> },
    { label: '外观', art: <><circle cx="10" cy="10" r="6" {...f} /><circle cx="10" cy="10" r="8" strokeWidth="1.500" strokeDasharray="1.800 1.700" /></> },
  ],
  [{ label: '资源导出', art: <path d="M9.500 4H2.500v13.500h14V11M10.500 1.500h8v8M18 2l-6 6" strokeWidth="1.900" /> }],
  [
    { label: '对齐', art: <><path d="M3.500 1v18" strokeWidth="1.300" /><path d="M5 3h8v6H5zM5 11h13v6H5z" {...f} /></> },
    { label: '透明度', art: <><circle cx="7.500" cy="7.500" r="6.500" {...f} /><circle cx="12.500" cy="12.500" r="5.500" fill="#8a8a8a" fillOpacity=".8" strokeWidth="1.400" /></> },
    { label: '渐变', art: <path d="M2 4.500h16v11H2z" fill="url(#fade2)" strokeWidth="1.300" /> },
    { label: '描边', art: <><path d="M1.500 4.500h17" /><path d="M1.500 9.500h17" strokeWidth="2" /><path d="M1.500 15h17" strokeWidth="3" /></> },
  ],
  [{ label: '路径查...', art: <><path d="M3 3h9v9H3zM8 8h10v10H8z" {...f} /><path d="M7.500 7.500h5v5h-5z" fill="#8a8a8a" stroke="#3a3a3a" /></> }],
  [
    {
      label: '符号',
      art: (
        <>
          <circle cx="10" cy="5" r="3.900" {...f} />
          <circle cx="5.500" cy="11" r="3.900" {...f} />
          <circle cx="14.500" cy="11" r="3.900" {...f} />
          <path d="M9 6h2v7c0 2.500 1 3.500 3.500 4.500h-9C8 16.500 9 15.500 9 13z" {...f} />
        </>
      ),
    },
    { label: '画笔', art: <path d="M6 12h8v7.500H6zM3 4l3 3 2 5-2.500.5C4 10 2 8 3 4zM8.500 0l2.500 1 .5 4L11 12H9L8 5zM18 4c-1 3-3 3-4 5l-1 3h-2l2-6c1-2 3-2 5-2z" {...f} /> },
    { label: '图形样式', art: <path d="M5.500 9.500v-7h13v13h-9M1.500 10.500h5v5h-5zM4 15.500v3h5v-5H6.500" strokeWidth="1.400" /> },
  ],
  [
    { label: '色板', art: <><path d="M2.500 5h15v10h-15z" fill="#8f8f8f" strokeWidth="1.300" /><path d="M8 5h4.500v5H8zM2.500 10H8v5H2.500z" fill="#555" /><path d="M12.500 5v10M2.500 10h15M8 5v10" /></> },
    { label: '颜色', art: <><path d="M10 3c5-1 9 2 9 6s-4 7.500-10 7.500c-5 0-8-2-8-4.500 0-3 4-1 5-2.500S6 4 10 3z" {...f} /><path d="M5 12.500h2M9 14h2M13 12h2M15 8.500h2M11 6h2" stroke="#4a4a4a" strokeWidth="2" /></> },
    { label: '颜色参考', art: <><path d="M3 2c8 0 15 7 15 16H3z" {...f} /><path d="M3.500 17 17 15.500 15.500 10 11 5.500z" fill="#8a8a8a" stroke="none" /><path d="M3.500 17 7 3M3.500 17 12 6M3.500 17 16 11M3.500 17h14" stroke="#6a6a6a" /></> },
  ],
];

function Dock() {
  return (
    <aside className="flex w-[104px] shrink-0 flex-col border-r-2 border-[#3d3d3d] bg-[#535353]">
      <div className="flex h-3 shrink-0 items-center justify-end border-b border-[#3a3a3a] bg-[#434343] pr-[5px]"><DoubleChevron dir="left" /></div>
      {dock.map((group, i) => (
        <div key={i} className="flex flex-col border-b border-[#3a3a3a] px-1 pb-[3px]">
          <div className="flex h-[9px] items-center justify-center"><Grip /></div>
          {group.map(({ label, art }) => (
            <button key={label} className="flex h-7 items-center whitespace-nowrap text-[12px] text-[#ececec]">
              <span
                className={clsx(
                  'flex h-[23px] w-[93px] items-center gap-2 rounded-[3px] border pl-1',
                  label === '路径查...' ? 'border-[#5f5f5f] bg-[#353535]' : 'border-transparent',
                )}
              >
                <svg viewBox="0 0 20 20" className="h-5 w-5 shrink-0 text-[#c3c3c3]" fill="none" stroke="currentColor">{art}</svg>
                {label}
              </span>
            </button>
          ))}
        </div>
      ))}
    </aside>
  );
}

/* ---------- properties ---------- */

function MoreDots() {
  return (
    <button aria-label="更多选项" className="flex gap-[1px]">
      {[0, 1, 2].map((i) => <span key={i} className="h-1 w-1 rounded-full bg-[#d0d0d0]" />)}
    </button>
  );
}

function TransformSection() {
  const label = 'w-5 whitespace-nowrap text-right text-[10px] text-[#bdbdbd]';
  return (
    <section className="border-b-2 border-[#4a4a4a] px-[10px] pb-[10px] pt-2">
      <h3 className="text-[10px] leading-[14px] text-[#c8c8c8]">变换</h3>
      <div className="mt-[7px] flex items-start">
        <RefPoint className="mt-[13px] h-[19px] w-[19px] shrink-0" />
        <div className="ml-[3px] flex flex-col gap-[5px]">
          <div className="flex items-center gap-1"><label htmlFor="px" className={label}>X:</label><Field id="px" label="X" value="611.1 px" className="w-[57px]" /></div>
          <div className="flex items-center gap-1"><label htmlFor="py" className={label}>Y:</label><Field id="py" label="Y" value="1049.289" className="w-[57px]" /></div>
          <div className="flex items-center gap-1">
            <label htmlFor="pa" className="flex w-5 items-center justify-end text-[10px] text-[#bdbdbd]">
              <svg viewBox="0 0 12 10" className="h-[10px] w-3 shrink-0" fill="none" stroke="#bdbdbd" strokeWidth="1.300"><path d="M8.500 1 1 9h10M6 3.500c2 1 3 3 3 5.500" /></svg>:
            </label>
            <Field id="pa" label="旋转" value="0°" className="w-[57px]" arrow="down" />
          </div>
        </div>
        <div className="ml-[15px] flex flex-col gap-[5px]">
          <div className="flex items-center"><label htmlFor="pw" className={label}>宽<Colon /></label><Field id="pw" label="宽" value="70 px" className="w-[57px]" /></div>
          <div className="flex items-center"><label htmlFor="ph" className={label}>高<Colon /></label><Field id="ph" label="高" value="25 px" className="w-[57px]" /></div>
          <div className="flex h-[21px] items-center gap-4 pl-6">
            <button aria-label="水平轴翻转">
              <svg viewBox="0 0 14 12" className="h-3 w-[14px]" fill="none" stroke="#c8c8c8"><path d="M1 2v8l4-4z" /><path d="M13.500 1.500v9L9 6z" fill="#c8c8c8" /><path d="M7 0v12" strokeDasharray="1 1" /></svg>
            </button>
            <button aria-label="垂直轴翻转">
              <svg viewBox="0 0 12 14" className="h-[14px] w-3" fill="none" stroke="#c8c8c8"><path d="M2 13h8L6 9z" /><path d="M1.500.5h9L6 5z" fill="#c8c8c8" /><path d="M0 7h12" strokeDasharray="1 1" /></svg>
            </button>
          </div>
        </div>
        <button aria-label="保持宽度和高度比例" className="ml-[9px] mt-4"><Unlink className="h-[18px] w-[18px]" /></button>
      </div>
      <div className="mt-[10px] flex justify-end pr-1"><MoreDots /></div>
    </section>
  );
}

function AppearanceSection() {
  const name = 'w-10 whitespace-nowrap text-[10px] leading-[12px]';
  const chip = 'h-[18px] w-[18px] shrink-0 border border-[#2b2b2b]';
  return (
    <section className="border-b-2 border-[#4a4a4a] px-[10px] pb-[9px] pt-2">
      <h3 className="text-[10px] leading-[14px] text-[#c8c8c8]">外观</h3>
      <div className="mt-2 flex flex-col gap-2">
        <div className="flex h-[21px] items-center gap-3"><NoneSwatch className={chip} /><span className="text-[10px] text-[#c8c8c8]">填色</span></div>
        <div className="flex h-[21px] items-center gap-3">
          <span className={clsx(chip, 'flex items-center justify-center bg-white')}><span className="h-[6px] w-[6px] border border-[#222] bg-[#535353]" /></span>
          <div className="flex items-center gap-[9px]">
            <label htmlFor="p-stroke" className={name}><span className="border-b border-dotted border-[#bdbdbd] text-[#e4e4e4]">描边</span></label>
            <Field id="p-stroke" label="描边粗细" value="1 pt" className="w-[70px]" stepper arrow="down" />
          </div>
        </div>
        <div className="flex h-[21px] items-center gap-3">
          <svg viewBox="0 0 18 18" className="h-[18px] w-[18px] shrink-0"><path d="M1.500 1.500h15v15h-15z" fill="#555" stroke="#b5b5b5" /><path d="M2 2h4v4H2zM10 2h4v4h-4zM6 6h4v4H6zM14 6h2v4h-2zM2 10h4v4H2zM10 10h4v4h-4zM6 14h4v2H6z" fill="#8a8a8a" /></svg>
          <div className="flex items-center gap-[9px]">
            <label htmlFor="p-opacity" className={name}><span className="border-b border-dotted border-[#bdbdbd] text-[#e4e4e4]">不透明度</span></label>
            <Field id="p-opacity" label="不透明度值" value="100%" className="w-[70px]" arrow="right" />
          </div>
        </div>
        <button className="h-[21px] self-start pl-[5px] text-[14px] italic leading-none text-[#c8c8c8] font-[family-name:'Open_Sans',sans-serif]">fx.</button>
      </div>
      <div className="mt-3 flex justify-end pr-1"><MoreDots /></div>
    </section>
  );
}

function PropertiesPanel() {
  const [tab, setTab] = useState('属性');
  const quick = ['位移路径', '扩展形状', '排列', '对齐像素网格', '重新着色'];
  return (
    <aside className="flex w-[251px] shrink-0 flex-col border-r border-[#3d3d3d] bg-[#535353]">
      <div className="flex h-3 shrink-0 items-center justify-end border-b border-[#3a3a3a] bg-[#434343] pr-1"><DoubleChevron dir="right" /></div>
      <div className="flex h-[26px] shrink-0 bg-[#424242]">
        {['属性', '画板', '图层'].map((t) => (
          <button
            key={t}
            onClick={() => setTab(t)}
            className={clsx('w-[42px] border-r border-[#3a3a3a] text-[12px]', tab === t ? 'bg-[#535353] text-white' : 'border-b text-[#a5a5a5]')}
          >
            {t}
          </button>
        ))}
        <div className="grow border-b border-[#3a3a3a]" />
      </div>
      <h2 className="border-b-2 border-[#4a4a4a] px-[10px] pb-[9px] pt-[11px] text-[10px] leading-[14px] text-[#c8c8c8]">矩形</h2>
      <TransformSection />
      <AppearanceSection />
      <section className="px-[10px] pt-[13px]">
        <h3 className="text-[10px] leading-[14px] text-[#c8c8c8]">快速操作</h3>
        <div className="mt-[7px] grid w-[210px] grid-cols-2 gap-[10px]">
          {quick.map((q) => (
            <button key={q} className={clsx('h-[21px] rounded-[3px] border border-[#757575] text-[10px] text-[#f0f0f0]', q === '重新着色' && 'col-span-2')}>{q}</button>
          ))}
        </div>
      </section>
      <div className="mt-auto pb-[134px] pl-[58px]">
        <div className="flex h-[50px] w-[50px] flex-col items-center justify-center rounded-full border-2 border-[#2a86ee] bg-white p-[2px]">
          <div className="flex h-full w-full flex-col items-center justify-center rounded-full border border-[#222] text-black">
            <svg viewBox="0 0 24 20" className="h-5 w-6" fill="none" stroke="#000" strokeWidth="1.400">
              <path d="M10 10C5 9 2 6 1.500 2M4.500 7.500 5 3.500M3 6 .5 5.500M7 9l1-4.500M14 10c5-1 8-4 8.500-8M19.500 7.500 19 3.500M21 6l2.500-.5M17 9l-1-4.500" />
              <path d="M8.500 9h7l1.500 2-1.500 4c-.8 3-2 4.500-3.500 4.500S9 18 8.500 15L7 11z" fill="#000" stroke="none" />
            </svg>
            <span className="text-[7px] font-bold italic leading-[9px]">行走客</span>
          </div>
        </div>
      </div>
    </aside>
  );
}

export default function App() {
  return (
    <div lang="zh-CN" className="flex h-screen flex-col overflow-hidden bg-[#535353] leading-normal font-[family-name:'Noto_Sans_CJK_SC',sans-serif]">
      <MenuBar />
      <ControlBar />
      <div className="flex min-h-0 grow">
        <ToolsPanel />
        <Document />
        <Dock />
        <PropertiesPanel />
      </div>
    </div>
  );
}
